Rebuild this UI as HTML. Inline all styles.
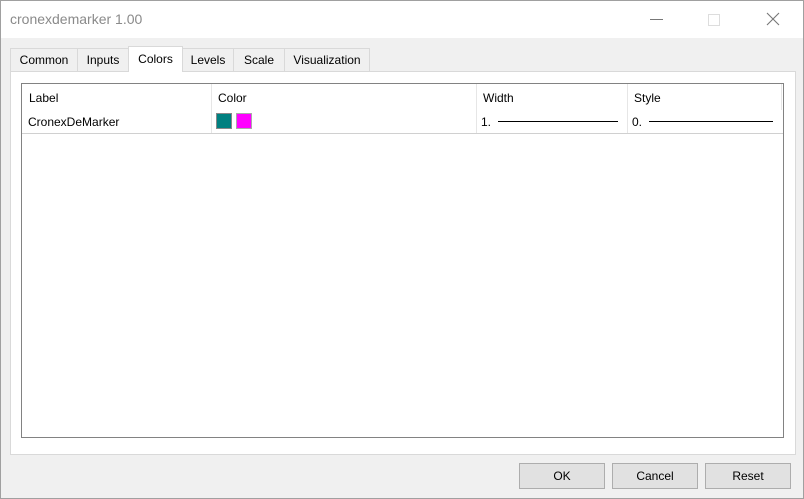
<!DOCTYPE html><html><head><style>
*{box-sizing:border-box;margin:0;padding:0}
body{width:804px;height:499px;position:relative;background:#f0f0f0;font-family:"Liberation Sans",sans-serif;font-size:12px;color:#000;overflow:hidden}
.win{position:absolute;left:0;top:0;width:804px;height:499px;outline:1px solid #a0a0a0;outline-offset:-1px}
.title{position:absolute;left:1px;top:1px;width:802px;height:37px;background:#fff}
.title span{position:absolute;left:9px;top:10px;font-size:14px;color:#8a8a8a}
.tab{position:absolute;top:48px;height:23px;border:1px solid #d9d9d9;border-bottom:none;background:#f0f0f0;text-align:center;line-height:22px;font-size:12px}
.panel{position:absolute;left:10px;top:71px;width:786px;height:384px;background:#fff;border:1px solid #d9d9d9}
.grid{position:absolute;left:21px;top:83px;width:763px;height:355px;border:1px solid #828282;background:#fff}
.t{position:absolute;font-size:12px}
.vs{position:absolute;width:1px;background:#e6e6e6;top:0;height:49px}
.btn{position:absolute;top:463px;width:86px;height:26px;background:#e1e1e1;border:1px solid #adadad;text-align:center;line-height:24px}
</style></head><body><div class="win">
<div class="title"><span>cronexdemarker 1.00</span>
<div style="position:absolute;left:649px;top:18px;width:13px;height:1px;background:#777"></div>
<div style="position:absolute;left:707px;top:13px;width:12px;height:12px;border:1px solid #ddd"></div>
<svg style="position:absolute;left:765px;top:11px" width="14" height="14"><path d="M1 1L13 13M13 1L1 13" stroke="#777" stroke-width="1.1"/></svg>
</div>
<div class="panel"></div>
<div class="tab" style="left:10px;width:68px">Common</div>
<div class="tab" style="left:77px;width:52px">Inputs</div>
<div class="tab" style="left:233px;width:52px">Scale</div>
<div class="tab" style="left:182px;width:52px">Levels</div>
<div class="tab" style="left:284px;width:86px">Visualization</div>
<div class="tab" style="left:128px;top:46px;height:26px;width:55px;background:#fff;line-height:24px">Colors</div>
<div class="grid">
<div class="vs" style="left:189px"></div><div class="vs" style="left:454px"></div><div class="vs" style="left:605px"></div><div class="vs" style="left:759px;height:26px"></div>
<div style="position:absolute;left:0;top:49px;width:761px;height:1px;background:#d0d0d0"></div>
<div class="t" style="left:7px;top:7px">Label</div>
<div class="t" style="left:196px;top:7px">Color</div>
<div class="t" style="left:461px;top:7px">Width</div>
<div class="t" style="left:612px;top:7px">Style</div>
<div class="t" style="left:6px;top:31px">CronexDeMarker</div>
<div style="position:absolute;left:194px;top:29px;width:16px;height:16px;background:#008080;border:1px solid #888"></div>
<div style="position:absolute;left:214px;top:29px;width:16px;height:16px;background:#ff00ff;border:1px solid #aaa"></div>
<div class="t" style="left:459px;top:31px">1.</div>
<div style="position:absolute;left:476px;top:37px;width:120px;height:1px;background:#000"></div>
<div class="t" style="left:610px;top:31px">0.</div>
<div style="position:absolute;left:627px;top:37px;width:124px;height:1px;background:#000"></div>
</div>
<div class="btn" style="left:519px">OK</div>
<div class="btn" style="left:612px">Cancel</div>
<div class="btn" style="left:705px">Reset</div>
</div></body></html>
